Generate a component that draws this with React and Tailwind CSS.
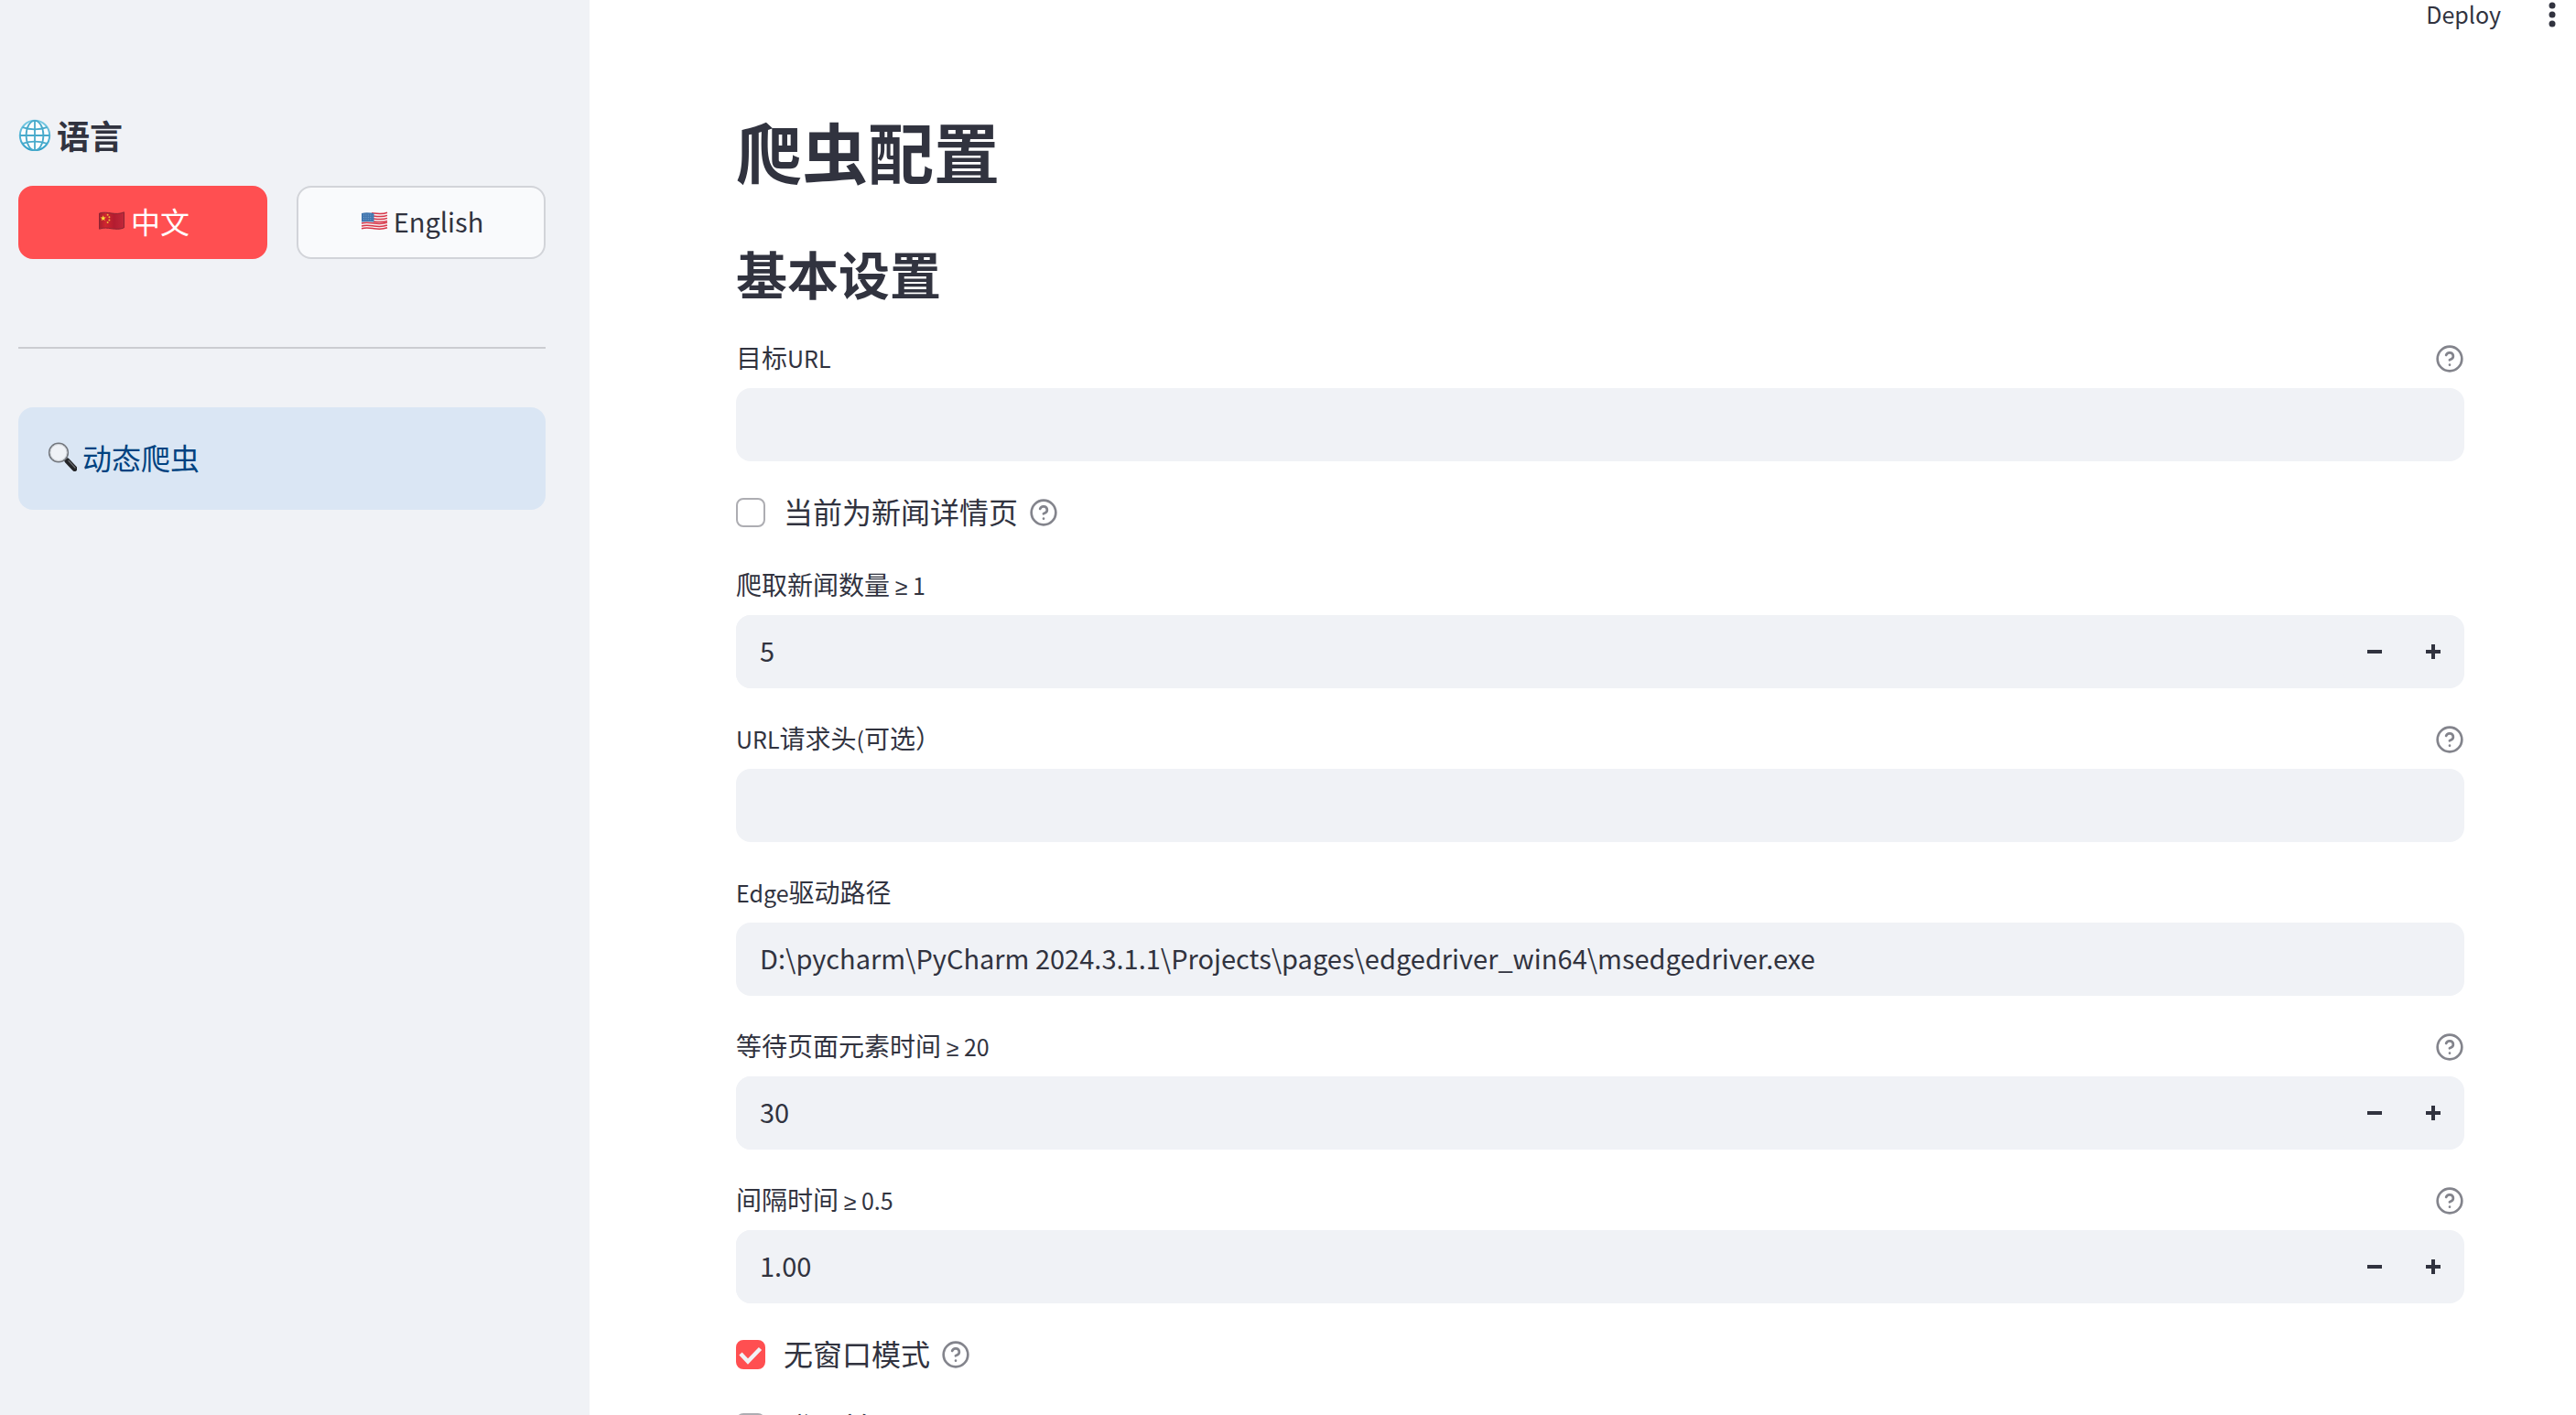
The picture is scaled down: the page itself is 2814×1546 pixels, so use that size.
import React, { useState } from 'react';
import { CircleQuestionMark } from 'lucide-react';
import clsx from 'clsx';

const TEXT_FIELD =
  'h-20 w-full min-w-0 rounded-2xl border-2 border-[#f0f2f6] bg-[#f0f2f6] px-6 pb-1 text-[29px] outline-none focus:border-[#ff4f51]';

const GlobeIcon = () => (
  <svg width="36" height="36" viewBox="0 0 36 36" fill="none" aria-hidden="true">
    <defs>
      <linearGradient id="globe" x1="0" y1="0" x2="0" y2="1">
        <stop offset="0" stopColor="#7ccbe4" />
        <stop offset="1" stopColor="#2f9fc8" />
      </linearGradient>
    </defs>
    <circle cx="18" cy="19" r="16.2" fill="#fbfdfe" stroke="url(#globe)" strokeWidth="2" />
    <g stroke="#48aacb" strokeWidth="1.8">
      <ellipse cx="18" cy="19" rx="9.400" ry="16.2" />
      <path d="M18 2.800v32.400M1.800 19h32.400" />
      <path d="M4.600 10.200c8 2.600 18.800 2.600 26.800 0M4.600 27.800c8-2.600 18.800-2.600 26.800 0" />
    </g>
  </svg>
);

const ChinaFlag = () => (
  <svg width="32" height="24" viewBox="0 0 32 24" aria-hidden="true">
    <defs>
      <linearGradient id="cn" x1="0" y1="0" x2="1" y2="0">
        <stop offset="0" stopColor="#a81f2d" />
        <stop offset="0.25" stopColor="#d0252f" />
        <stop offset="0.6" stopColor="#b31c30" />
        <stop offset="1" stopColor="#c2283a" />
      </linearGradient>
    </defs>
    <path
      d="M3.500 4c5-1.500 9-.6 13.500 0s9 .8 13.500-1.200v17c-4.500 2-9 1.600-13.500 1s-8.500-1.400-13.500.4z"
      fill="url(#cn)"
      stroke="#8c2433"
      strokeWidth="1"
    />
    <path
      d="M7.700 6.200l.8 2.300h2.300l-1.900 1.400.7 2.400-1.900-1.500-1.900 1.500.7-2.400-1.900-1.400h2.300z"
      fill="#fbe03a"
    />
    <g fill="#f0b63a">
      <circle cx="12.600" cy="5.800" r="1" />
      <circle cx="14.400" cy="8.200" r="1" />
      <circle cx="14.400" cy="11.400" r="1" />
      <circle cx="12.600" cy="14" r="1" />
    </g>
  </svg>
);

const UsaFlag = () => (
  <svg width="32" height="24" viewBox="0 0 32 24" fill="none" aria-hidden="true">
    <path
      d="M3 4c5-1.500 9-.6 13.500 0s9 .8 14.500-1.200v17c-5 2-10 1.600-14.500 1s-8.500-1.400-13.500.4z"
      fill="#f7f3f4"
    />
    <g stroke="#d8374a" strokeWidth="1.500">
      <path d="M14 3.800c6 .6 12 1.600 17-.6" />
      <path d="M16 7c5.500.8 10.500 1.200 15-.6" />
      <path d="M16 10c5.500.8 10.500 1.200 15-.6" />
      <path d="M16 13c5.500.8 10.500 1.200 15-.6" />
      <path d="M3 15c5-1.400 9-.6 13.500 0s9.500 1 14.500-1" />
      <path d="M3 18c5-1.400 9-.6 13.500 0s9.500 1 14.500-1" />
      <path d="M3 20.800c5-1.400 9-.6 13.500 0s9.500 1 14.500-1" />
    </g>
    <path d="M3 4c5-1.500 9-.6 13.500 0v9.600c-4.500-.6-8.500-1.200-13.500 0z" fill="#4277b0" />
    <path
      d="M5 6h10M5 8.400h10M5 10.800h10"
      stroke="#8eb0d2"
      strokeWidth="0.800"
      strokeDasharray="1 1.400"
    />
  </svg>
);

const MagnifierIcon = () => (
  <svg width="32" height="32" viewBox="0 0 32 32" fill="none" aria-hidden="true">
    <path d="M19 19l3.500 3.500" stroke="#6b6e73" strokeWidth="3" />
    <path d="M21.500 20.500l8 8.500" stroke="#232427" strokeWidth="6" strokeLinecap="round" />
    <path d="M23 20.500l7 7.500" stroke="#6d6f74" strokeWidth="1.200" strokeLinecap="round" />
    <circle cx="12" cy="11.500" r="10.300" fill="#eff2f6" stroke="#73777d" strokeWidth="1.600" />
    <circle cx="12" cy="11.500" r="9" stroke="#c3c8cd" strokeWidth="0.800" />
  </svg>
);

// Latin glyphs of the CJK face run large, so they get a smaller size inside labels
const MixedText = ({ children }) =>
  children.split(/([ -~]*≥[ -~]*|[ -~]+)/).map((part, i) =>
    i % 2 ? (
      <span key={i} className="text-[25px] leading-none">
        {part.split('≥').map((piece, j) => (
          <React.Fragment key={j}>
            {j > 0 && <span className="font-['Noto_Sans',sans-serif]">≥</span>}
            {piece}
          </React.Fragment>
        ))}
      </span>
    ) : (
      part
    )
  );

const HelpButton = () => (
  <button type="button" aria-label="帮助" className="shrink-0 text-[#83848c]">
    <CircleQuestionMark size={32} />
  </button>
);

const Field = ({ id, label, help, children }) => (
  <div>
    <div className="mb-2 flex h-12 items-center justify-between">
      <label htmlFor={id} className="pb-1 text-[28px] leading-[44px]">
        <MixedText>{label}</MixedText>
      </label>
      {help && <HelpButton />}
    </div>
    {children}
  </div>
);

const TextField = ({ id, label, help, initial = '' }) => (
  <Field id={id} label={label} help={help}>
    <input id={id} type="text" defaultValue={initial} className={TEXT_FIELD} />
  </Field>
);

const NumberField = ({ id, label, help, initial, min, step, digits = 0 }) => {
  const [value, setValue] = useState(initial.toFixed(digits));

  const change = (delta) => {
    const next = Math.max(min, Number(value) + delta);
    setValue(next.toFixed(digits));
  };

  return (
    <Field id={id} label={label} help={help}>
      <div className="flex rounded-2xl bg-[#f0f2f6] pr-0.5">
        <input
          id={id}
          type="number"
          min={min}
          step={step}
          value={value}
          onChange={(e) => setValue(e.target.value)}
          className={clsx(TEXT_FIELD, '[appearance:textfield]')}
        />
        <button
          type="button"
          aria-label="减少"
          onClick={() => change(-step)}
          className="flex w-16 shrink-0 items-center justify-center"
        >
          <svg width="16" height="16" viewBox="0 0 16 16" fill="currentColor">
            <path d="M0 6h16v4H0z" />
          </svg>
        </button>
        <button
          type="button"
          aria-label="增加"
          onClick={() => change(step)}
          className="flex w-16 shrink-0 items-center justify-center"
        >
          <svg width="16" height="16" viewBox="0 0 16 16" fill="currentColor">
            <path d="M6 0h4v6h6v4h-6v6H6v-6H0V6h6z" />
          </svg>
        </button>
      </div>
    </Field>
  );
};

const CheckField = ({ id, label, help, initial = false }) => {
  const [checked, setChecked] = useState(initial);

  return (
    <div className="flex h-12 items-center gap-3">
      <label htmlFor={id} className="flex items-center gap-5">
        <span className="grid size-8 shrink-0">
          <input
            id={id}
            type="checkbox"
            checked={checked}
            onChange={(e) => setChecked(e.target.checked)}
            className="col-start-1 row-start-1 size-8 appearance-none rounded-lg border-2 border-[#adadb2] checked:border-[#ff4f51] checked:bg-[#ff4f51]"
          />
          {checked && (
            <svg
              viewBox="0 0 32 32"
              className="pointer-events-none col-start-1 row-start-1 size-8"
              fill="none"
              stroke="#f0f2f6"
              strokeWidth="4.500"
            >
              <path d="M5 15l8 8.500 13.500-14" />
            </svg>
          )}
        </span>
        <span className="pb-1 text-[32px] leading-[44px]">{label}</span>
      </label>
      {help && <HelpButton />}
    </div>
  );
};

const LanguageButton = ({ active, onClick, children }) => (
  <button
    type="button"
    onClick={onClick}
    className={clsx(
      'flex h-20 flex-1 items-center justify-center gap-1.5 rounded-2xl border-2 pb-1',
      active ? 'border-[#ff4f51] bg-[#ff4f51] text-white' : 'border-[#d2d4d9] bg-[#f9fafc]'
    )}
  >
    {children}
  </button>
);

const Sidebar = () => {
  const [lang, setLang] = useState('zh');

  return (
    <aside className="w-[644px] shrink-0 bg-[#f0f2f6] pt-[125px] pr-12 pl-5">
      <h3 className="flex items-center gap-1.5 text-4xl/[44px] font-semibold">
        <GlobeIcon />
        语言
      </h3>
      <div className="mt-[34px] flex gap-8">
        <LanguageButton active={lang === 'zh'} onClick={() => setLang('zh')}>
          <ChinaFlag />
          <span className="text-[32px] leading-[44px]">中文</span>
        </LanguageButton>
        <LanguageButton active={lang === 'en'} onClick={() => setLang('en')}>
          <UsaFlag />
          <span className="text-[29px] leading-[44px]">English</span>
        </LanguageButton>
      </div>
      <hr className="mt-24 mb-16 border-t-2 border-[#cbccd1]" />
      <div className="flex h-28 items-center gap-1.5 rounded-2xl bg-[#dae6f4] px-8 pb-1 text-[32px] text-[#004280]">
        <MagnifierIcon />
        动态爬虫
      </div>
    </aside>
  );
};

const App = () => {
  return (
    <div className="flex h-screen overflow-hidden bg-white font-['Noto_Sans_CJK_SC',sans-serif] text-[#31333f]">
      <Sidebar />
      <div className="min-w-0 flex-1 overflow-hidden">
        <header className="flex h-8 items-start justify-end gap-13 pr-[22px]">
          <button type="button" className="text-[25px] leading-[30px]">
            Deploy
          </button>
          <button type="button" aria-label="菜单">
            <svg width="8" height="32" viewBox="0 0 8 32" fill="currentColor">
              <circle cx="4" cy="6" r="3.500" />
              <circle cx="4" cy="16" r="3.500" />
              <circle cx="4" cy="26" r="3.500" />
            </svg>
          </button>
        </header>
        <main className="pt-[88px] pr-[122px] pl-40">
          <h1 className="text-7xl/[88px] font-bold">爬虫配置</h1>
          <h2 className="mt-14 text-[56px] leading-[68px] font-semibold">基本设置</h2>
          <form className="mt-9 flex flex-col gap-8" onSubmit={(e) => e.preventDefault()}>
            <TextField id="url" label="目标URL" help />
            <CheckField id="detail" label="当前为新闻详情页" help />
            <NumberField id="count" label="爬取新闻数量 ≥ 1" initial={5} min={1} step={1} />
            <TextField id="headers" label="URL请求头(可选）" help />
            <TextField
              id="driver"
              label="Edge驱动路径"
              initial="D:\pycharm\PyCharm 2024.3.1.1\Projects\pages\edgedriver_win64\msedgedriver.exe"
            />
            <NumberField id="wait" label="等待页面元素时间 ≥ 20" help initial={30} min={20} step={1} />
            <NumberField
              id="interval"
              label="间隔时间 ≥ 0.5"
              help
              initial={1}
              min={0.5}
              step={0.5}
              digits={2}
            />
            <CheckField id="headless" label="无窗口模式" help initial />
            <CheckField id="login" label="登录前" />
          </form>
        </main>
      </div>
    </div>
  );
};

export default App;
